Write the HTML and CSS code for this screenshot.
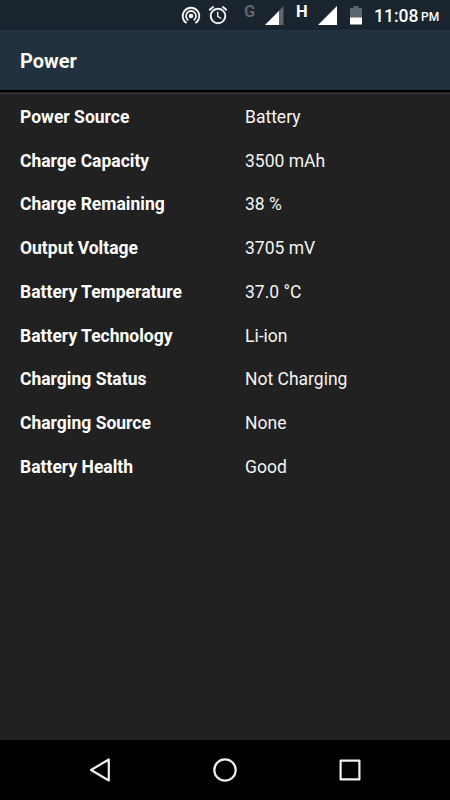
FILE: index.html
```
<!DOCTYPE html>
<html lang="en">
  <head>
  <meta charset="utf-8">
  <title>Power</title>
  <link rel="stylesheet" href="styles.css">
  </head>
  <body>

<div class="status">
  <svg class="hotspot" width="20" height="20" viewBox="0 0 20 20">
    <circle cx="10" cy="11" r="2.3" fill="#f4f4f4"/>
    <path d="M7.3 15.2A5 5 0 1 1 12.7 15.2M5.6 18.1A8.3 8.3 0 1 1 14.4 18.1" fill="none" stroke="#f4f4f4" stroke-width="1.8"/>
  </svg>
  <svg class="alarm" width="20" height="20" viewBox="0 0 20 20">
    <circle cx="10" cy="11" r="7.3" fill="none" stroke="#f4f4f4" stroke-width="1.9"/>
    <path d="M1.2 5.2L5.6 1.5M18.8 5.2L14.4 1.5" stroke="#f4f4f4" stroke-width="1.9"/>
    <path d="M9.7 6.8V11.4L13.3 13.5" fill="none" stroke="#f4f4f4" stroke-width="1.4"/>
  </svg>
  <span class="net dim">G</span>
  <svg class="signal1" width="19" height="19" viewBox="0 0 19 19">
    <path d="M0 19L18.5 0V19Z" fill="#5c666e"/>
    <path d="M0 19L14 5V19Z" fill="#fff"/>
  </svg>
  <span class="net">H</span>
  <svg class="signal2" width="19" height="19" viewBox="0 0 19 19">
    <path d="M0 19L19 0V19Z" fill="#fff"/>
  </svg>
  <svg class="battery" width="12" height="19" viewBox="0 0 12 19">
    <path d="M0 2H3.5V0H8.5V2H12V12H0Z" fill="#5c666e"/>
    <path d="M0 11.5H12V18.5H0Z" fill="#fff"/>
  </svg>
  <span class="time">11:08</span>
  <span class="pm">PM</span>
</div>

<h1>Power</h1>

<div id="content">
<table>
  <tr><th>Power Source</th><td>Battery</td></tr>
  <tr><th>Charge Capacity</th><td>3500 mAh</td></tr>
  <tr><th>Charge Remaining</th><td>38 %</td></tr>
  <tr><th>Output Voltage</th><td>3705 mV</td></tr>
  <tr><th>Battery Temperature</th><td>37.0 °C</td></tr>
  <tr><th>Battery Technology</th><td>Li-ion</td></tr>
  <tr><th>Charging Status</th><td>Not Charging</td></tr>
  <tr><th>Charging Source</th><td>None</td></tr>
  <tr><th>Battery Health</th><td>Good</td></tr>
</table>
</div>

<div class="nav">
  <svg width="24" height="24" viewBox="0 0 24 24"><path d="M3 12L20.8 1.5V22.5Z"/></svg>
  <svg width="24" height="24" viewBox="0 0 24 24"><circle cx="12" cy="12" r="10.7"/></svg>
  <svg width="24" height="24" viewBox="0 0 24 24"><rect x="2.6" y="2.6" width="18.8" height="18.8"/></svg>
</div>

  </body>
</html>
```

FILE: styles.css
```
body {margin:0; height:800px; display:flex; flex-direction:column; overflow:hidden; background-color:#212121; color:#f3f3f3; font-family:Roboto, sans-serif;}
svg {display:block; flex:none;}

/* status bar */
.status {height:30px; display:flex; align-items:flex-start; background-color:#1a242f;}
.hotspot {margin:5px 0 0 181px;}
.alarm {margin:5px 0 0 7px;}
.net {width:12px; margin:2px 0 0 16px; font-weight:bold; font-size:16.5px; line-height:19px; color:#fff;}
.dim {color:#5c666e;}
.signal1 {margin:6px 0 0 9px;}
.signal1 + .net {margin-left:12px;}
.signal2 {margin:6px 0 0 10px;}
.battery {margin:6px 0 0 13px;}
.time {width:47px; margin-left:12px; font-size:17.5px; line-height:32px; font-weight:500; color:#fff;}
.pm {font-size:12px; line-height:35px; font-weight:500; color:#fff;}

h1 {height:60px; margin:0; padding-left:20px; font-size:20px; line-height:62px; background-color:#223140; color:#f8f8ef;}

#content {flex:1; border-top:2px solid #000; box-shadow:inset 0 1px 0 #212121, inset 0 2px 0 #373737; padding-top:3px;}
table {width:100%; table-layout:fixed; border-collapse:collapse;}
th, td {width:50%; height:43.75px; box-sizing:border-box; padding:0 0 0 20px; font-size:17.5px; text-align:left; vertical-align:middle;}
th {color:#fff;}

/* navigation keys */
.nav {height:60px; display:flex; align-items:center; justify-content:center; gap:101px; background-color:#000;}
.nav svg {fill:none; stroke:#efefef; stroke-width:2.2; stroke-linejoin:round;}
```
